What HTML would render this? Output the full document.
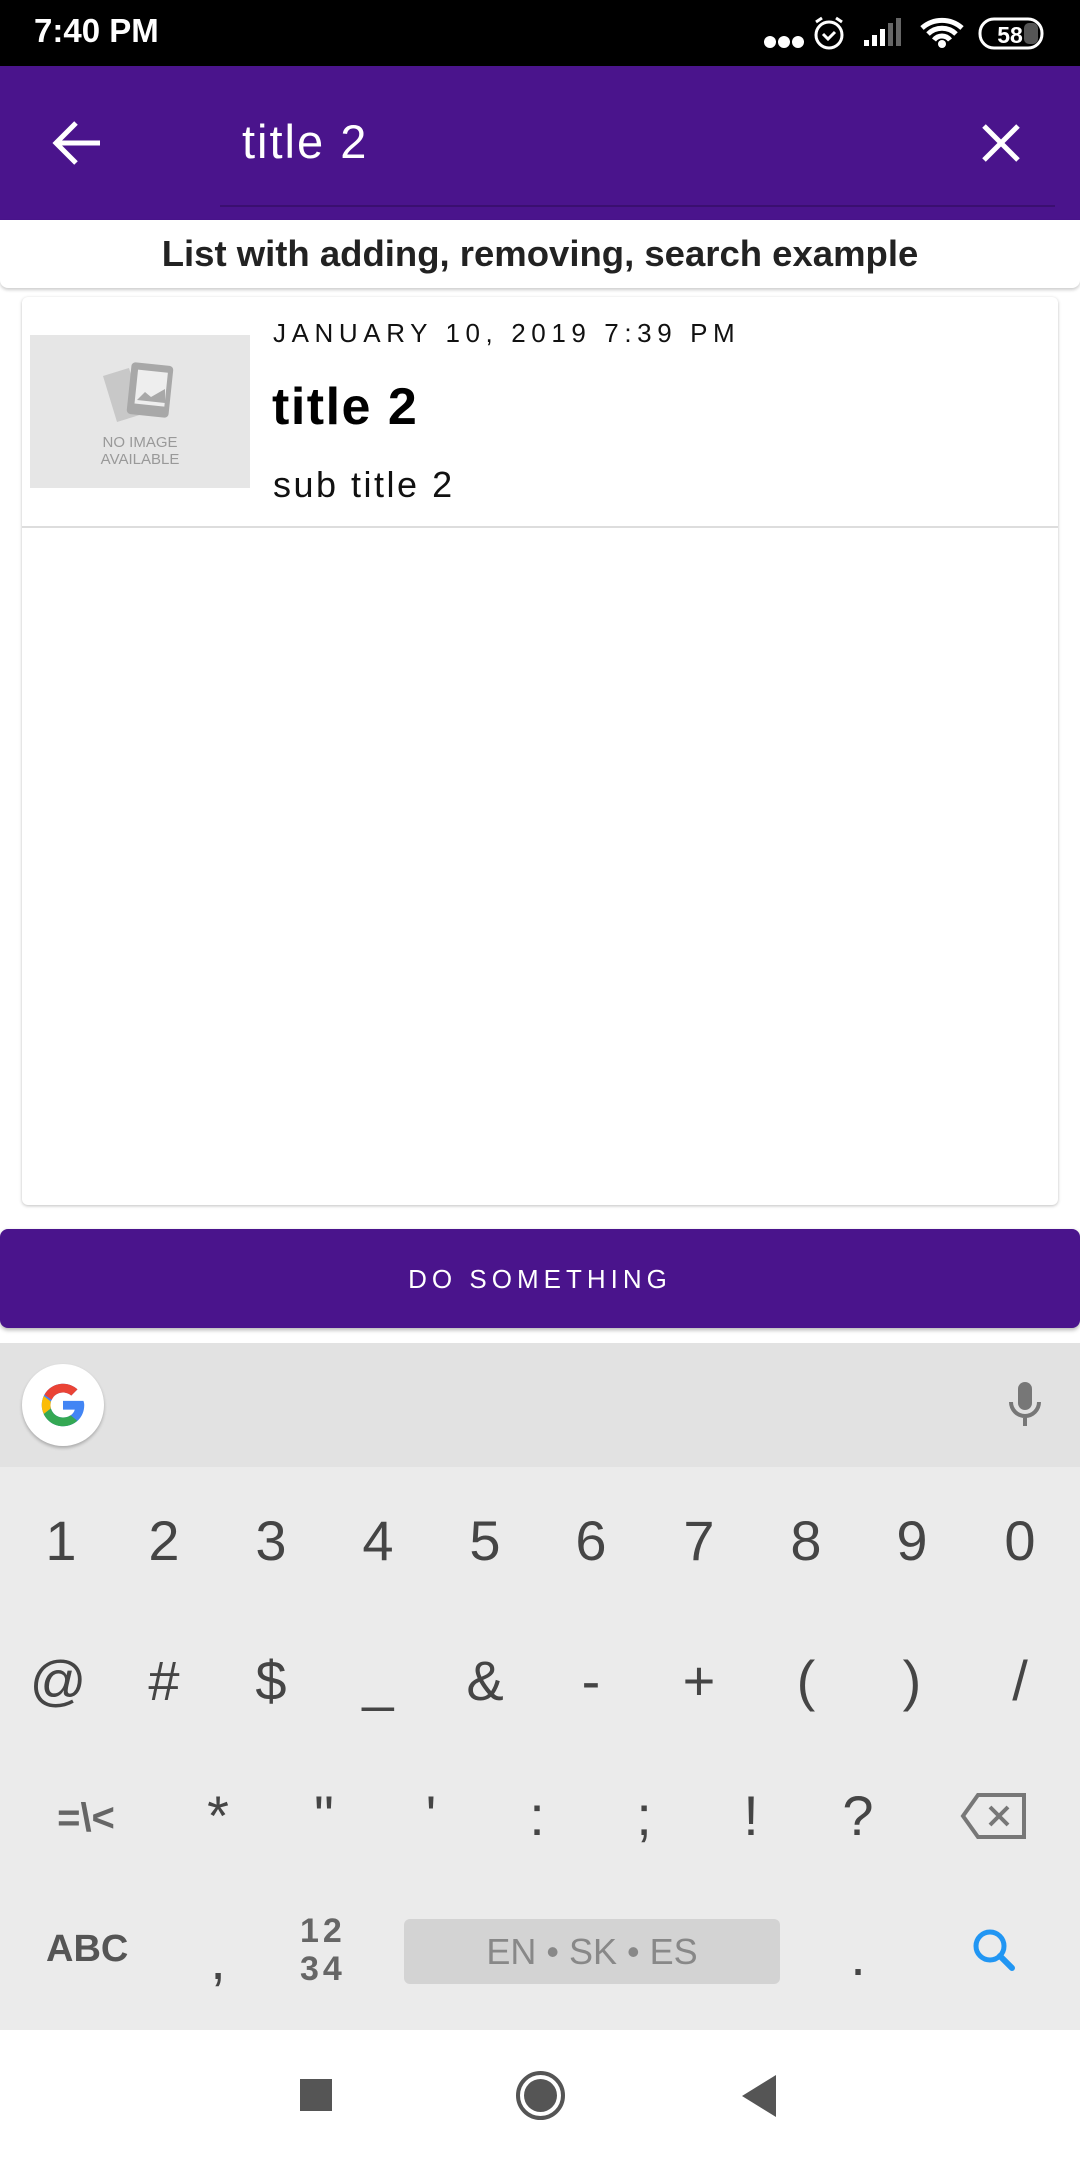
<!DOCTYPE html>
<html><head><meta charset="utf-8"><style>
*{margin:0;padding:0;box-sizing:border-box}
body{width:1080px;height:2160px;background:#fff;font-family:"Liberation Sans",Roboto,sans-serif;position:relative;overflow:hidden}
.a{position:absolute}
.k{position:absolute;width:100px;text-align:center;color:#454545;font-size:56px;line-height:60px}
</style></head><body>
<div class="a" style="left:0;top:0;width:1080px;height:66px;background:#000"></div>
<div class="a" style="left:34px;top:12px;color:#fff;font-size:33px;font-weight:bold;">7:40 PM</div>
<svg class="a" style="left:740px;top:0" width="340" height="66" viewBox="0 0 340 66">
<g fill="#fff"><circle cx="30" cy="42" r="6"/><circle cx="44" cy="42" r="6"/><circle cx="58" cy="42" r="6"/></g>
<circle cx="89" cy="35" r="13" fill="none" stroke="#fff" stroke-width="3"/>
<path d="M83 34l5 5 7-7M76 22l6-4M102 22l-6-4" stroke="#fff" stroke-width="3" fill="none"/>
<g fill="#fff"><rect x="124" y="40" width="5" height="6"/><rect x="132" y="35" width="5" height="11"/><rect x="140" y="29" width="5" height="17"/></g>
<g fill="#666"><rect x="148" y="23" width="5" height="23"/><rect x="156" y="18" width="5" height="28"/></g>
<path d="M182 28a30 30 0 0 1 40 0M188 34a20 20 0 0 1 28 0M194 40a10 10 0 0 1 16 0" stroke="#fff" stroke-width="5" fill="none"/>
<circle cx="202" cy="44" r="4" fill="#fff"/>
<rect x="240" y="19" width="62" height="29" rx="14" fill="none" stroke="#fff" stroke-width="3"/>
<rect x="284" y="23" width="14" height="21" rx="5" fill="#555"/>
<text x="270" y="43" fill="#fff" font-size="23" font-weight="bold" text-anchor="middle" font-family="Liberation Sans">58</text>
</svg>
<div class="a" style="left:0;top:66px;width:1080px;height:154px;background:#4a148c"></div>
<svg class="a" style="left:50px;top:118px" width="54" height="50" viewBox="0 0 54 50"><path d="M50 25H6M26 5L6 25l20 20" stroke="#fff" stroke-width="5" fill="none"/></svg>
<div class="a" style="left:242px;top:114px;color:#fff;font-size:47px;letter-spacing:2px">title 2</div>
<svg class="a" style="left:980px;top:122px" width="42" height="42" viewBox="0 0 42 42"><path d="M4 4l34 34M38 4L4 38" stroke="#fff" stroke-width="5"/></svg>
<div class="a" style="left:220px;top:205px;width:835px;height:2px;background:#3a0f70"></div>
<div class="a" style="left:0;top:220px;width:1080px;height:68px;background:#fff;border-radius:0 0 8px 8px;box-shadow:0 2px 3px rgba(0,0,0,.2)"></div>
<div class="a" style="left:0;top:233px;width:1080px;text-align:center;font-size:36.5px;font-weight:bold;color:#222">List with adding, removing, search example</div>
<div class="a" style="left:22px;top:297px;width:1036px;height:908px;background:#fff;border-radius:6px;box-shadow:0 1px 3px rgba(0,0,0,.25)"></div>
<div class="a" style="left:30px;top:335px;width:220px;height:153px;background:#e6e6e6"></div>
<svg class="a" style="left:95px;top:360px" width="90" height="70" viewBox="0 0 90 70">
<path d="M8 16l26-8 14 46-26 8z" fill="#c8c8c8"/>
<rect x="34" y="4" width="42" height="52" rx="4" fill="#a8a8a8" transform="rotate(6 55 30)"/>
<rect x="41" y="11" width="30" height="34" fill="#eee" transform="rotate(6 55 30)"/>
<path d="M42 40l8-8 6 5 14-8v14z" fill="#a8a8a8"/>
</svg>
<div class="a" style="left:30px;top:434px;width:220px;text-align:center;font-size:15px;color:#999;line-height:17px">NO IMAGE<br>AVAILABLE</div>
<div class="a" style="left:273px;top:318px;font-size:26px;letter-spacing:5.6px;color:#111">JANUARY 10, 2019 7:39 PM</div>
<div class="a" style="left:272px;top:377px;font-size:52px;font-weight:bold;color:#000;letter-spacing:1.5px">title 2</div>
<div class="a" style="left:273px;top:464px;font-size:36px;color:#111;letter-spacing:2.5px">sub title 2</div>
<div class="a" style="left:22px;top:526px;width:1036px;height:2px;background:#ddd"></div>
<div class="a" style="left:0;top:1229px;width:1080px;height:99px;background:#4a148c;border-radius:8px;box-shadow:0 2px 4px rgba(0,0,0,.3)"></div>
<div class="a" style="left:0;top:1264px;width:1080px;text-align:center;color:#fff;font-size:26px;letter-spacing:5px">DO SOMETHING</div>
<div class="a" style="left:0;top:1343px;width:1080px;height:124px;background:#e2e2e2"></div>
<div class="a" style="left:0;top:1467px;width:1080px;height:563px;background:#ebebeb"></div>
<div class="a" style="left:22px;top:1364px;width:82px;height:82px;border-radius:50%;background:#fff;box-shadow:0 2px 3px rgba(0,0,0,.25)"></div>
<svg class="a" style="left:38px;top:1380px" width="50" height="50" viewBox="0 0 48 48">
<path d="M43.6 20H24v8.4h11.3C34 33 29.6 36 24 36c-6.6 0-12-5.4-12-12s5.4-12 12-12c3 0 5.8 1.1 7.9 3l6-6C34.3 5.7 29.4 3.6 24 3.6 12.7 3.6 3.6 12.7 3.6 24S12.7 44.4 24 44.4c11 0 20.4-8 20.4-20.4 0-1.300-.3-2.800-.8-4z" fill="#4285f4"/>
<path d="M6.3 14.1l6.9 5C15 14.7 19.1 12 24 12c3 0 5.8 1.1 7.9 3l6-6C34.3 5.7 29.4 3.6 24 3.6c-7.8 0-14.5 4.4-17.7 10.5z" fill="#ea4335"/>
<path d="M24 44.4c5.3 0 10.1-2 13.7-5.3l-6.4-5.3C29.3 35.2 26.8 36 24 36c-5.5 0-10.2-3.7-11.7-8.8l-6.9 5.3C8.7 39.6 15.8 44.4 24 44.4z" fill="#34a853"/>
<path d="M12.3 27.2C12 26.2 12 25.1 12 24s.1-2.3.4-3.3l-6.9-5.3C4.3 18 3.6 20.9 3.6 24s.7 6 2 8.5z" fill="#fbbc05"/>
</svg>
<svg class="a" style="left:1004px;top:1380px" width="42" height="50" viewBox="0 0 42 50"><rect x="14" y="2" width="14" height="28" rx="7" fill="#777"/><path d="M7 22a14 14 0 0 0 28 0M21 36v10" stroke="#777" stroke-width="4" fill="none"/></svg>
<div class="k" style="left:11px;top:1511px">1</div><div class="k" style="left:114px;top:1511px">2</div><div class="k" style="left:221px;top:1511px">3</div><div class="k" style="left:328px;top:1511px">4</div><div class="k" style="left:435px;top:1511px">5</div><div class="k" style="left:541px;top:1511px">6</div><div class="k" style="left:649px;top:1511px">7</div><div class="k" style="left:756px;top:1511px">8</div><div class="k" style="left:862px;top:1511px">9</div><div class="k" style="left:970px;top:1511px">0</div>
<div class="k" style="left:8px;top:1651px">@</div><div class="k" style="left:114px;top:1651px">#</div><div class="k" style="left:221px;top:1651px">$</div><div class="k" style="left:328px;top:1651px">_</div><div class="k" style="left:435px;top:1651px">&amp;</div><div class="k" style="left:541px;top:1651px">-</div><div class="k" style="left:649px;top:1651px">+</div><div class="k" style="left:756px;top:1651px">(</div><div class="k" style="left:862px;top:1651px">)</div><div class="k" style="left:970px;top:1651px">/</div>
<div class="k" style="left:36px;top:1788px;width:100px;font-size:40px;color:#666;font-weight:bold">=\&lt;</div>
<div class="k" style="left:168px;top:1786px">*</div><div class="k" style="left:274px;top:1786px">"</div><div class="k" style="left:381px;top:1786px">'</div><div class="k" style="left:487px;top:1786px">:</div><div class="k" style="left:594px;top:1786px">;</div><div class="k" style="left:701px;top:1786px">!</div><div class="k" style="left:808px;top:1786px">?</div>
<svg class="a" style="left:960px;top:1792px" width="68" height="48" viewBox="0 0 68 48"><path d="M18 3h46v42H18L3 24z" fill="none" stroke="#777" stroke-width="4"/><path d="M30 15l18 18M48 15L30 33" stroke="#777" stroke-width="4"/></svg>
<div class="a" style="left:46px;top:1928px;font-size:38px;font-weight:bold;color:#555">ABC</div>
<div class="k" style="left:168px;top:1930px">,</div>
<div class="a" style="left:300px;top:1912px;font-size:34px;font-weight:bold;color:#666;line-height:38px;letter-spacing:4px">12<br>34</div>
<div class="a" style="left:404px;top:1919px;width:376px;height:65px;background:#d3d3d3;border-radius:6px;text-align:center;font-size:36px;color:#888;line-height:65px">EN • SK • ES</div>
<div class="k" style="left:808px;top:1926px">.</div>
<svg class="a" style="left:970px;top:1926px" width="48" height="48" viewBox="0 0 48 48"><circle cx="20" cy="20" r="14" fill="none" stroke="#2196f3" stroke-width="5"/><path d="M30 30l12 12" stroke="#2196f3" stroke-width="6" stroke-linecap="round"/></svg>
<div class="a" style="left:300px;top:2079px;width:32px;height:32px;background:#555"></div>
<div class="a" style="left:516px;top:2071px;width:49px;height:49px;border-radius:50%;border:4px solid #555"></div>
<div class="a" style="left:524px;top:2079px;width:33px;height:33px;border-radius:50%;background:#555"></div>
<svg class="a" style="left:742px;top:2075px" width="36" height="42" viewBox="0 0 36 42"><path d="M34 0v42L0 21z" fill="#555"/></svg>
</body></html>
